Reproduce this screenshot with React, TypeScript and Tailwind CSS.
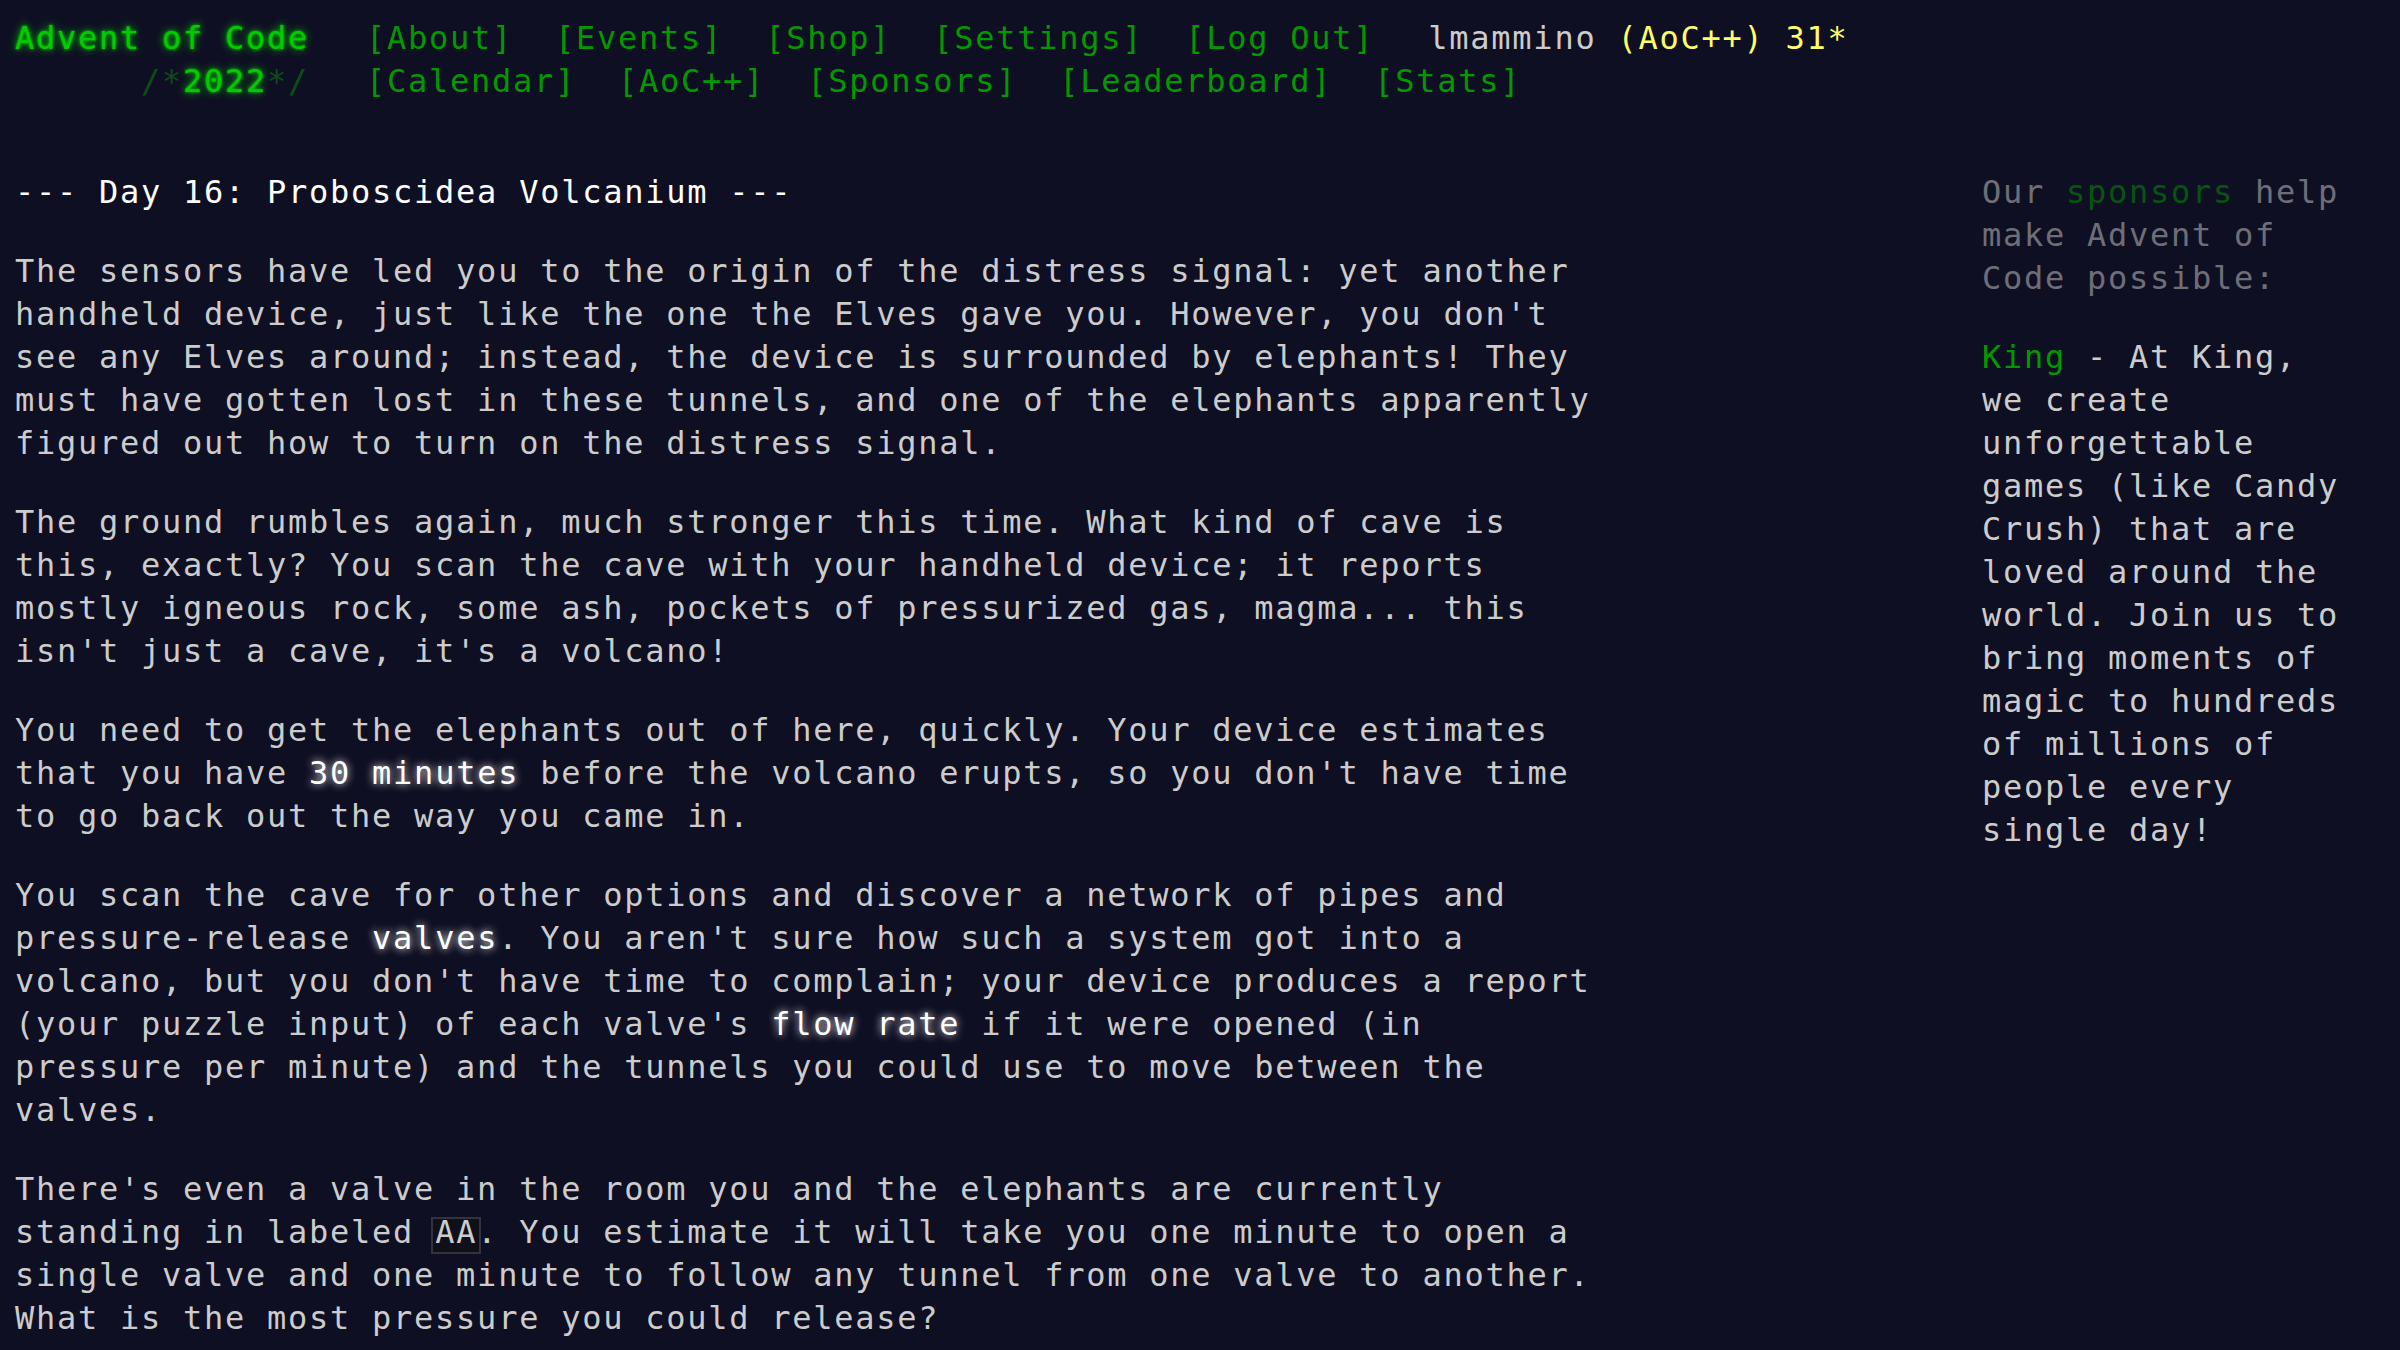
import React from 'react';

const glowTitle = 'text-[#00cc00] [text-shadow:0_0_3px_#00cc00,0_0_8px_#00cc00]';
const link = 'text-[#009900] no-underline';

function Em({ children }: { children: React.ReactNode }) {
  return <em className="not-italic text-white [text-shadow:0_0_9px_#ffffff]">{children}</em>;
}

function Code({ children }: { children: React.ReactNode }) {
  return (
    <code className="relative inline-block font-['DejaVu_Sans_Mono',monospace]">
      <span className="absolute -left-[4px] -right-[4px] top-[6px] bottom-0 border-2 border-[#333340] bg-[#10101a]" />
      <span className="relative">{children}</span>
    </code>
  );
}

function Lines({ lines }: { lines: React.ReactNode[] }) {
  return (
    <>
      {lines.map((l, i) => (
        <React.Fragment key={i}>
          {l}
          {i < lines.length - 1 && <br />}
        </React.Fragment>
      ))}
    </>
  );
}

const paragraphs: React.ReactNode[][] = [
  [
    'The sensors have led you to the origin of the distress signal: yet another',
    "handheld device, just like the one the Elves gave you. However, you don't",
    'see any Elves around; instead, the device is surrounded by elephants! They',
    'must have gotten lost in these tunnels, and one of the elephants apparently',
    'figured out how to turn on the distress signal.',
  ],
  [
    'The ground rumbles again, much stronger this time. What kind of cave is',
    'this, exactly? You scan the cave with your handheld device; it reports',
    'mostly igneous rock, some ash, pockets of pressurized gas, magma... this',
    "isn't just a cave, it's a volcano!",
  ],
  [
    'You need to get the elephants out of here, quickly. Your device estimates',
    <>that you have <Em>30 minutes</Em> before the volcano erupts, so you don't have time</>,
    'to go back out the way you came in.',
  ],
  [
    'You scan the cave for other options and discover a network of pipes and',
    <>pressure-release <Em>valves</Em>. You aren't sure how such a system got into a</>,
    "volcano, but you don't have time to complain; your device produces a report",
    <>(your puzzle input) of each valve's <Em>flow rate</Em> if it were opened (in</>,
    'pressure per minute) and the tunnels you could use to move between the',
    'valves.',
  ],
  [
    "There's even a valve in the room you and the elephants are currently",
    <>standing in labeled <Code>AA</Code>. You estimate it will take you one minute to open a</>,
    'single valve and one minute to follow any tunnel from one valve to another.',
    'What is the most pressure you could release?',
  ],
];

export default function App() {
  return (
    <div className="min-h-screen bg-[#0f0f23] text-[#cccccc] font-['DejaVu_Sans_Mono',monospace] text-[32px] tracking-[1.74px] leading-[43px] overflow-hidden">
      <header className="pt-[17px] pl-[15px] whitespace-pre">
        <div className="flex">
          <div className="w-[351px] shrink-0">
            <span className={glowTitle}>Advent of Code</span>
          </div>
          <nav>
            <span className={link}>[About]</span>{'  '}
            <span className={link}>[Events]</span>{'  '}
            <span className={link}>[Shop]</span>{'  '}
            <span className={link}>[Settings]</span>{'  '}
            <span className={link}>[Log Out]</span>{'  '}
            <span className="ml-[12px] text-[#cccccc]">lmammino</span>{' '}
            <span className="text-[#ffff66]">(AoC++)</span>{' '}
            <span className="text-[#ffff66]">31*</span>
          </nav>
        </div>
        <div className="flex">
          <div className="w-[351px] shrink-0">
            {'      '}
            <span className="text-[#00cc00] opacity-[0.33]">/*</span>
            <span className={glowTitle}>2022</span>
            <span className="text-[#00cc00] opacity-[0.33]">*/</span>
          </div>
          <nav>
            <span className={link}>[Calendar]</span>{'  '}
            <span className={link}>[AoC++]</span>{'  '}
            <span className={link}>[Sponsors]</span>{'  '}
            <span className={link}>[Leaderboard]</span>{'  '}
            <span className={link}>[Stats]</span>
          </nav>
        </div>
      </header>

      <div className="flex justify-between mt-[68px]">
        <main className="pl-[15px]">
          <article>
            <h2 className="text-white mb-[36px]">--- Day 16: Proboscidea Volcanium ---</h2>
            {paragraphs.map((p, i) => (
              <p key={i} className="mb-[36px]">
                <Lines lines={p} />
              </p>
            ))}
          </article>
        </main>

        <aside className="w-[375px] mr-[43px] shrink-0">
          <div className="opacity-50">
            Our <span className={link}>sponsors</span> help<br />
            make Advent of<br />
            Code possible:
          </div>
          <div className="mt-[36px]">
            <span className="text-[#009900]">King</span> - At King,<br />
            we create<br />
            unforgettable<br />
            games (like Candy<br />
            Crush) that are<br />
            loved around the<br />
            world. Join us to<br />
            bring moments of<br />
            magic to hundreds<br />
            of millions of<br />
            people every<br />
            single day!
          </div>
        </aside>
      </div>
    </div>
  );
}
